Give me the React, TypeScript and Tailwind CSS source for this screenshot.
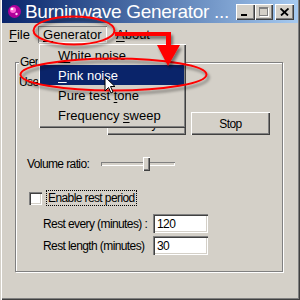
const raised =
  "bg-[#d4d0c8] shadow-[inset_1px_1px_0_#fff,inset_-1px_-1px_0_#404040,inset_-2px_-2px_0_#808080]";
const sunken =
  "bg-white shadow-[inset_1px_1px_0_#808080,inset_2px_2px_0_#404040,inset_-1px_-1px_0_#fff,inset_-2px_-2px_0_#d4d0c8]";

function TitleBar() {
  return (
    <div className="mx-[2px] flex h-[23px] items-center bg-linear-to-r from-[#0a246a] to-[#a6caf0]">
      <svg width="15" height="15" viewBox="0 0 15 15" className="ml-[5px] shrink-0">
        <circle cx="7.5" cy="7.5" r="6.5" fill="#b0009a" />
        <circle cx="6" cy="6" r="3" fill="#ff6ad8" />
        <circle cx="5" cy="5" r="1.3" fill="#fff" />
        <circle cx="9.5" cy="10" r="1.2" fill="#ffd0f4" />
      </svg>
      <span className="ml-[3px] whitespace-nowrap text-[19px] leading-[23px] tracking-[-0.3px] text-white">
        Burninwave Generator ...
      </span>
      <div className="ml-auto mr-[4px] flex items-center">
        <div className={`${raised} relative h-[16px] w-[19px]`}>
          <div className="absolute left-[5px] top-[10px] h-[2px] w-[6px] bg-black" />
        </div>
        <div className={`${raised} relative h-[16px] w-[18px]`}>
          <div className="absolute left-[4px] top-[3px] h-[9px] w-[9px] border border-t-2 border-[#808080] shadow-[1px_1px_0_#fff]" />
        </div>
        <div className={`${raised} ml-[2px] flex h-[16px] w-[19px] items-center justify-center`}>
          <svg width="9" height="8" viewBox="0 0 9 8">
            <path d="M0.5 0.5 L8 7.5 M8.5 0.5 L1 7.5" stroke="#000" strokeWidth="1.8" />
          </svg>
        </div>
      </div>
    </div>
  );
}

function MenuBar() {
  return (
    <div className="flex h-[20px] items-end whitespace-nowrap">
      <div className="ml-[3px] h-[17px] w-[35px] pl-[6px] pt-[1px]">
        <span className="underline underline-offset-2">F</span>ile
      </div>
      <div className="h-[17px] w-[69px] pl-[5px] pt-[1px] shadow-[inset_1px_1px_0_#808080,inset_-1px_-1px_0_#fff]">
        <span className="underline underline-offset-2">G</span>enerator
      </div>
      <div className="ml-[9px] h-[17px] pt-[1px]">
        <span className="underline underline-offset-2">A</span>bout
      </div>
    </div>
  );
}

function GroupBox() {
  return (
    <div className="relative ml-[15px] mt-[19px] h-[210px] w-[268px] whitespace-nowrap border border-[#808080] text-[12px] tracking-[-0.6px] shadow-[inset_1px_1px_0_#fff,1px_1px_0_#fff]">
      <span className="absolute -top-[9px] left-[3px] bg-[#d4d0c8] px-[1px]">General</span>
      <div className="ml-[3px] mt-[11px] h-[16px]">Use sound type:</div>
      <div className="ml-[91px] mt-[22px] flex gap-[5px]">
        <button type="button" className={`${raised} h-[23px] w-[79px]`}>
          Play
        </button>
        <button type="button" className={`${raised} h-[23px] w-[79px]`}>
          Stop
        </button>
      </div>
      <div className="mt-[21px] flex h-[16px] items-center">
        <span className="ml-[11px] w-[74px]">Volume ratio:</span>
        <div className="relative flex h-[16px] w-[74px] items-center">
          <div className="h-[4px] w-full shadow-[inset_1px_1px_0_#808080,inset_-1px_-1px_0_#fff]" />
          <div className={`${raised} absolute left-[42px] top-[1px] h-[14px] w-[7px]`} />
        </div>
      </div>
      <div className="mt-[18px] flex h-[16px] items-center">
        <div className={`${sunken} ml-[13px] h-[13px] w-[13px]`} />
        <span className="ml-[4px] border border-dotted border-black px-[1px] leading-[14px]">
          Enable rest period
        </span>
      </div>
      <div className="mt-[8px] flex h-[19px] items-center">
        <span className="ml-[27px] w-[110px]">Rest every (minutes) :</span>
        <div className={`${sunken} h-[19px] w-[55px] pl-[4px] pt-[2px]`}>120</div>
      </div>
      <div className="mt-[3px] flex h-[19px] items-center">
        <span className="ml-[27px] w-[110px]">Rest length (minutes)</span>
        <div className={`${sunken} h-[19px] w-[55px] pl-[4px] pt-[2px]`}>30</div>
      </div>
    </div>
  );
}

function DropMenu() {
  const items = [
    { pre: "", key: "W", post: "hite noise" },
    { pre: "", key: "P", post: "ink noise", active: true },
    { pre: "Pure test ", key: "t", post: "one" },
    { pre: "Frequency ", key: "s", post: "weep" },
  ];
  return (
    <div className="absolute left-[38px] top-[43px] h-[85px] w-[148px] bg-[#d4d0c8] px-[2px] pt-[2px] shadow-[inset_1px_1px_0_#d4d0c8,inset_2px_2px_0_#fff,inset_-1px_-1px_0_#404040,inset_-2px_-2px_0_#808080]">
      {items.map((it) => (
        <div
          key={it.key}
          className={`h-[20px] whitespace-pre pl-[18px] leading-[21px] ${it.active ? "bg-[#0a246a] text-white" : ""}`}
        >
          {it.pre}
          <span className="underline underline-offset-2">{it.key}</span>
          {it.post}
        </div>
      ))}
    </div>
  );
}

function Annotations() {
  return (
    <svg width="300" height="300" className="pointer-events-none absolute left-0 top-0">
      <defs>
        <filter id="sh" x="-20%" y="-50%" width="140%" height="200%">
          <feDropShadow dx="2" dy="3" stdDeviation="1.5" floodColor="#000" floodOpacity="0.45" />
        </filter>
      </defs>
      <g filter="url(#sh)" fill="none" stroke="#ff0000" strokeWidth="2">
        <ellipse cx="74" cy="30.5" rx="40.5" ry="14" />
        <ellipse cx="113.5" cy="74.5" rx="93" ry="16" />
      </g>
      <g filter="url(#sh)" fill="#ff0000">
        <path d="M115 32 H171 V47 H166 V36 H115 Z" />
        <path d="M157 45 H180 L168 66 Z" />
      </g>
      <path
        d="M105 77 L105 91 L108.5 87.5 L111 93 L113 92 L110.5 86.5 L115 86.5 Z"
        fill="#fff"
        stroke="#000"
        strokeWidth="1"
        strokeLinejoin="round"
      />
    </svg>
  );
}

export default function App() {
  return (
    <div className="relative h-[300px] w-[300px] overflow-hidden bg-[#d4d0c8] font-['Liberation_Sans',Arial,sans-serif] text-[13px] leading-4 text-black shadow-[inset_1px_0_0_#d4d0c8,inset_2px_0_0_#fff,inset_-1px_-1px_0_#404040,inset_-2px_-2px_0_#808080]">
      <TitleBar />
      <MenuBar />
      <GroupBox />
      <DropMenu />
      <Annotations />
    </div>
  );
}
